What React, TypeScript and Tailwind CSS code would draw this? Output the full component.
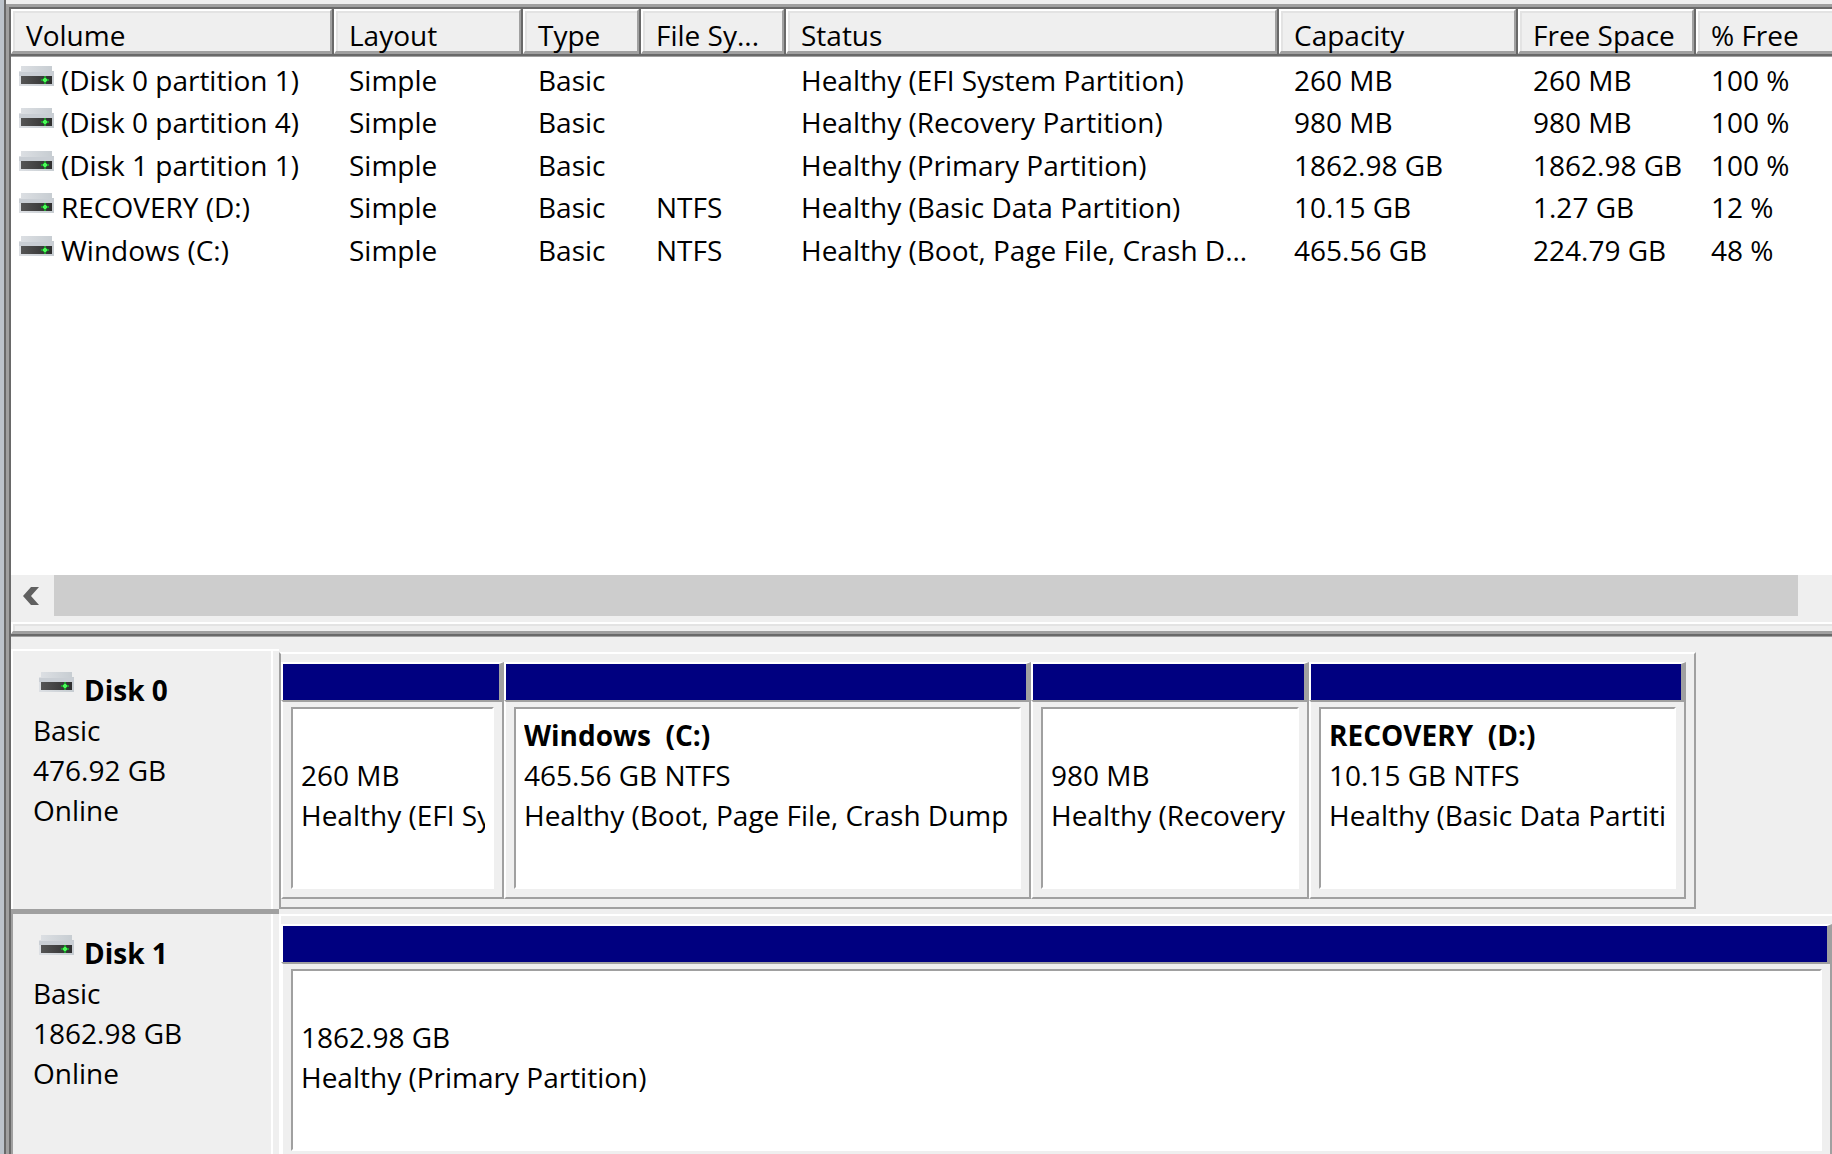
import React from "react";

type Volume = {
  name: string;
  layout: string;
  type: string;
  fs: string;
  status: string;
  capacity: string;
  free: string;
  pct: string;
};

type Partition = { title?: string; size: string; status: string; width: string };

const columns = [
  { label: "Volume", width: "w-[323px]" },
  { label: "Layout", width: "w-[189px]" },
  { label: "Type", width: "w-[118px]" },
  { label: "File Sy...", width: "w-[145px]" },
  { label: "Status", width: "w-[493px]" },
  { label: "Capacity", width: "w-[239px]" },
  { label: "Free Space", width: "w-[178px]" },
  { label: "% Free", width: "w-auto" },
];

const volumes: Volume[] = [
  { name: "(Disk 0 partition 1)", layout: "Simple", type: "Basic", fs: "", status: "Healthy (EFI System Partition)", capacity: "260 MB", free: "260 MB", pct: "100 %" },
  { name: "(Disk 0 partition 4)", layout: "Simple", type: "Basic", fs: "", status: "Healthy (Recovery Partition)", capacity: "980 MB", free: "980 MB", pct: "100 %" },
  { name: "(Disk 1 partition 1)", layout: "Simple", type: "Basic", fs: "", status: "Healthy (Primary Partition)", capacity: "1862.98 GB", free: "1862.98 GB", pct: "100 %" },
  { name: "RECOVERY (D:)", layout: "Simple", type: "Basic", fs: "NTFS", status: "Healthy (Basic Data Partition)", capacity: "10.15 GB", free: "1.27 GB", pct: "12 %" },
  { name: "Windows (C:)", layout: "Simple", type: "Basic", fs: "NTFS", status: "Healthy (Boot, Page File, Crash D...", capacity: "465.56 GB", free: "224.79 GB", pct: "48 %" },
];

const disk0: Partition[] = [
  { size: "260 MB", status: "Healthy (EFI Sy", width: "w-[223px]" },
  { title: "Windows\u00a0 (C:)", size: "465.56 GB NTFS", status: "Healthy (Boot, Page File, Crash Dump", width: "w-[527px]" },
  { size: "980 MB", status: "Healthy (Recovery", width: "w-[278px]" },
  { title: "RECOVERY\u00a0 (D:)", size: "10.15 GB NTFS", status: "Healthy (Basic Data Partiti", width: "w-[377px]" },
];

const disk1: Partition[] = [
  { size: "1862.98 GB", status: "Healthy (Primary Partition)", width: "flex-1" },
];

function DriveIcon() {
  return (
    <svg width="36" height="21" viewBox="0 0 36 21" className="shrink-0" aria-hidden="true">
      <defs>
        <linearGradient id="lid" x1="0" x2="1">
          <stop offset="0" stopColor="#dde0e4" />
          <stop offset="1" stopColor="#c6ccd1" />
        </linearGradient>
        <linearGradient id="face" x1="0" x2="1">
          <stop offset="0" stopColor="#555555" />
          <stop offset="1" stopColor="#2f2f2f" />
        </linearGradient>
      </defs>
      <path d="M2 0H33V5H35V20H0V5H2Z" fill="url(#lid)" />
      <rect x="0" y="6" width="35" height="4" fill="#c9ced4" />
      <rect x="2" y="10" width="31" height="8" fill="url(#face)" />
      <path d="M22 13h8v2h-8zM25 10h2v8h-2z" fill="#1f9a2c" />
      <rect x="24" y="12" width="4" height="4" fill="#1f9a2c" />
      <path d="M24 13h4v2h-4zM25 12h2v4h-2z" fill="#4dfa5a" />
    </svg>
  );
}

function VolumeList() {
  return (
    <table className="w-full table-fixed border-separate border-spacing-0 text-left">
      <thead>
        <tr>
          {columns.map((c, i) => {
            const last = i === columns.length - 1;
            return (
              <th key={c.label} scope="col" className={`h-12 border-b border-[#a0a0a0] p-0 font-normal ${c.width}`}>
                <div className={last ? "border-b-2 border-[#696969]" : "border-r-2 border-b-2 border-[#696969]"}>
                  <div
                    className={
                      last
                        ? "border-t-2 border-b-3 border-l-2 border-t-white border-b-[#a0a0a0] border-l-white"
                        : "border-t-2 border-r-2 border-b-3 border-l-2 border-t-white border-r-[#a0a0a0] border-b-[#a0a0a0] border-l-white"
                    }
                  >
                    <div className="h-10 border-t-2 border-l-2 border-[#e3e3e3] bg-[#efefef] pt-1 pl-[11px] leading-9 whitespace-nowrap">
                      {c.label}
                    </div>
                  </div>
                </div>
              </th>
            );
          })}
        </tr>
      </thead>
      <tbody className="whitespace-nowrap before:block before:h-[2px]">
        {volumes.map((v) => (
          <tr key={v.name} className="h-[42px] leading-[42px] even:h-[43px]">
            <td className="p-0 pl-2 align-top">
              <div className="flex items-start">
                <div className="pt-[7px]">
                  <DriveIcon />
                </div>
                <span className="pl-[6px]">{v.name}</span>
              </div>
            </td>
            {[v.layout, v.type, v.fs, v.status, v.capacity, v.free, v.pct].map((t, i) => (
              <td key={i} className="p-0 pl-[15px] align-top">
                {t}
              </td>
            ))}
          </tr>
        ))}
      </tbody>
    </table>
  );
}

function PartitionBlock({ title, size, status, width }: Partition) {
  return (
    <button type="button" className={`block min-w-0 text-left ${width}`}>
      <div className="h-[38px] border-t-2 border-r-5 border-l-2 border-t-white border-r-[#a0a0a0] border-l-white bg-[#000080]" />
      <div className="border-2 border-t-[#a0a0a0] border-r-[#a0a0a0] border-b-[#a0a0a0] border-l-white px-2 pt-[5px] pb-2">
        <div className="h-[182px] border-2 border-t-[#a0a0a0] border-r-white border-b-white border-l-[#a0a0a0] bg-white pt-[6px] pr-[7px] pl-2">
          <div className="overflow-hidden leading-10 whitespace-nowrap">
            <div className="h-10 font-bold">{title}</div>
            <div>{size}</div>
            <div>{status}</div>
          </div>
        </div>
      </div>
    </button>
  );
}

function DiskLabel({ name, size, first }: { name: string; size: string; first?: boolean }) {
  return (
    <div className={first ? "flex w-[268px] shrink-0 border-b-5 border-[#a0a0a0]" : "flex w-[268px] shrink-0"}>
      <div
        className={
          first
            ? "flex-1 border-t-2 border-r-2 border-l-2 border-white pt-[19px] pl-5"
            : "flex-1 border-r-2 border-l-2 border-r-white border-l-[#a0a0a0] pt-[19px] pl-5"
        }
      >
        <div className="flex leading-10">
          <div className="pt-[2px] pl-[6px]">
            <DriveIcon />
          </div>
          <h2 className="pl-[9px] font-bold">{name}</h2>
        </div>
        <div className="leading-10">
          <div>Basic</div>
          <div>{size}</div>
          <div>Online</div>
        </div>
      </div>
      <div className={first ? "w-[6px] border-t-2 border-white" : "w-[6px]"} />
    </div>
  );
}

function Partitions({ items }: { items: Partition[] }) {
  return (
    <div className="flex">
      {items.map((p) => (
        <PartitionBlock key={p.status} {...p} />
      ))}
    </div>
  );
}

export default function App() {
  return (
    <div className="flex h-screen overflow-hidden bg-[#efefef] font-['Open_Sans','Noto_Sans',sans-serif] text-[28px] text-black">
      <div className="w-1 shrink-0 bg-[#bcc3cb]" />
      <div className="w-[2px] shrink-0 bg-[#696969]" />
      <main className="flex min-w-0 flex-1 flex-col pt-1">
        <div className="flex-1 border-t-3 border-l-3 border-[#a0a0a0]">
          <div className="h-full border-t-2 border-l-2 border-[#696969]">
            <div className="h-[566px] overflow-hidden bg-white">
              <VolumeList />
            </div>
            <div className="flex h-[41px]">
              <button type="button" aria-label="Scroll left" className="flex w-[43px] items-center justify-center pr-1">
                <svg width="16" height="18" viewBox="0 0 16 18" aria-hidden="true">
                  <path d="M8 0H16L8 9L16 18H8L0 9Z" fill="#606060" />
                </svg>
              </button>
              <div className="mr-[34px] flex-1 bg-[#cdcdcd]" />
            </div>
            <div className="mt-[6px] h-[15px] border-b border-[#a0a0a0]">
              <div className="border-b-2 border-[#696969]">
                <div className="border-t-2 border-b-3 border-l-2 border-white border-b-[#a0a0a0]">
                  <div className="h-[7px] border-t-2 border-l-2 border-[#e3e3e3]" />
                </div>
              </div>
            </div>
            <div className="pt-3">
              <section className="flex h-[265px]">
                <DiskLabel name="Disk 0" size="476.92 GB" first />
                <div className="pt-[3px]">
                  <div className="h-[257px] border-2 border-t-white border-r-[#a0a0a0] border-b-[#a0a0a0] border-l-[#a0a0a0] pt-2 pr-2">
                    <Partitions items={disk0} />
                  </div>
                </div>
              </section>
              <section className="flex h-[263px]">
                <DiskLabel name="Disk 1" size="1862.98 GB" />
                <div className="min-w-0 flex-1 border-t-2 border-l-2 border-white pt-2">
                  <Partitions items={disk1} />
                </div>
              </section>
            </div>
          </div>
        </div>
      </main>
    </div>
  );
}
